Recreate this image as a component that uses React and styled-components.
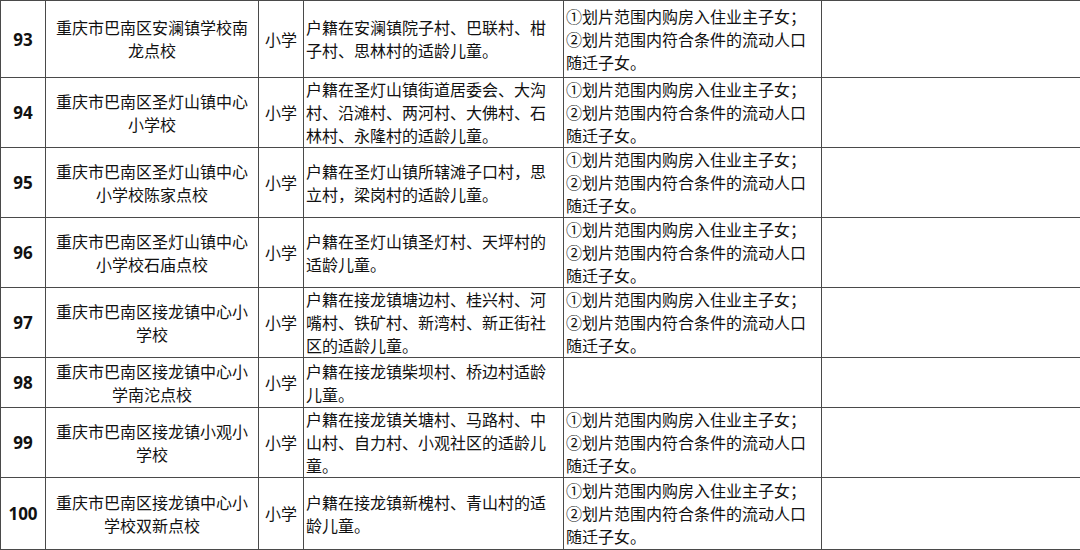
import React from 'react';
import styled, { createGlobalStyle } from 'styled-components';

const GlobalStyle = createGlobalStyle`
  html, body {
    margin: 0;
    padding: 0;
    background: #fff;
  }
  body {
    font-family: 'Noto Sans CJK SC', 'Noto Sans', sans-serif;
    color: #111;
  }
`;

const lineColor = '#4a4a4a';

const Table = styled.table`
  width: 1080px;
  table-layout: fixed;
  border-collapse: collapse;
  border-top: 1px solid #9a9a9a;
  border-left: 1px solid #9a9a9a;
  font-size: 16px;
  line-height: 23px;
`;

const Col = styled.col`
  width: ${p => p.$w}px;
`;

const Row = styled.tr`
  height: ${p => p.$h}px;
`;

const Cell = styled.td`
  border: 1px solid ${lineColor};
  padding: 0 2px;
  vertical-align: middle;
  text-align: ${p => p.$align || 'left'};
  word-break: break-all;
`;

const NumCell = styled(Cell)`
  font-family: 'Open Sans', 'Noto Sans', sans-serif;
  font-weight: 700;
  font-size: 17px;
  text-align: center;
  padding: 0;
`;

const NameCell = styled(Cell)`
  text-align: center;
  padding: 0 6px;
`;

const Line = styled.div``;

const widths = [45, 213, 45, 260, 258, 259];

const rule = ['①划片范围内购房入住业主子女；', '②划片范围内符合条件的流动人口', '随迁子女。'];

const rows = [
  { no: 93, h: 77, name: '重庆市巴南区安澜镇学校南龙点校', area: '户籍在安澜镇院子村、巴联村、柑子村、思林村的适龄儿童。', rule: true },
  { no: 94, h: 70, name: '重庆市巴南区圣灯山镇中心小学校', area: '户籍在圣灯山镇街道居委会、大沟村、沿滩村、两河村、大佛村、石林村、永隆村的适龄儿童。', rule: true },
  { no: 95, h: 70, name: '重庆市巴南区圣灯山镇中心小学校陈家点校', area: '户籍在圣灯山镇所辖滩子口村，思立村，梁岗村的适龄儿童。', rule: true },
  { no: 96, h: 70, name: '重庆市巴南区圣灯山镇中心小学校石庙点校', area: '户籍在圣灯山镇圣灯村、天坪村的适龄儿童。', rule: true },
  { no: 97, h: 70, name: '重庆市巴南区接龙镇中心小学校', area: '户籍在接龙镇塘边村、桂兴村、河嘴村、铁矿村、新湾村、新正街社区的适龄儿童。', rule: true },
  { no: 98, h: 50, name: '重庆市巴南区接龙镇中心小学南沱点校', area: '户籍在接龙镇柴坝村、桥边村适龄儿童。', rule: false },
  { no: 99, h: 70, name: '重庆市巴南区接龙镇小观小学校', area: '户籍在接龙镇关塘村、马路村、中山村、自力村、小观社区的适龄儿童。', rule: true },
  { no: 100, h: 72, name: '重庆市巴南区接龙镇中心小学校双新点校', area: '户籍在接龙镇新槐村、青山村的适龄儿童。', rule: true },
];

export default function App() {
  return (
    <>
      <GlobalStyle />
      <Table>
        <colgroup>
          {widths.map((w, i) => <Col key={i} $w={w} />)}
        </colgroup>
        <tbody>
          {rows.map(r => (
            <Row key={r.no} $h={r.h}>
              <NumCell>{r.no}</NumCell>
              <NameCell>{r.name}</NameCell>
              <Cell $align="center">小学</Cell>
              <Cell>{r.area}</Cell>
              <Cell>
                {r.rule && rule.map(l => <Line key={l}>{l}</Line>)}
              </Cell>
              <Cell />
            </Row>
          ))}
        </tbody>
      </Table>
    </>
  );
}
